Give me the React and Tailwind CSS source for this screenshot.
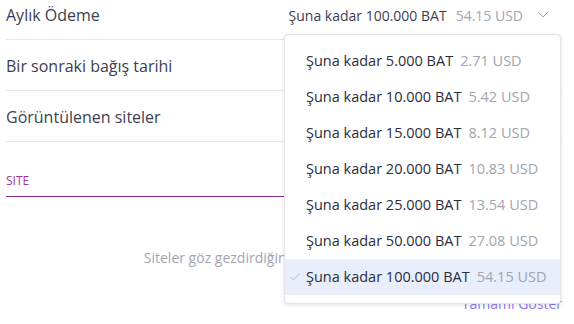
import React from "react";

const items = [
  ["5.000", "2.71"],
  ["10.000", "5.42"],
  ["15.000", "8.12"],
  ["20.000", "10.83"],
  ["25.000", "13.54"],
  ["50.000", "27.08"],
  ["100.000", "54.15"],
];

export default function App() {
  return (
    <div className="w-[574px] h-[324px] overflow-hidden bg-white" style={{ fontFamily: "'Open Sans', 'Noto Sans', sans-serif" }}>
      <div className="relative ml-[6px] w-[556px]">
        <div className="h-[40px] flex items-start justify-between border-b border-[#e6e6ec] pt-[3px]">
          <span className="text-[16px] leading-[24px] text-[#3d4052]">Aylık Ödeme</span>
          <div className="flex items-center h-[24px] pr-[14px]">
            <span className="text-[14px] text-[#3d4052]">Şuna kadar 100.000 BAT</span>
            <span className="ml-[9px] text-[14px] text-[#a3a5b0]">54.15 USD</span>
            <svg className="ml-[15px]" width="10" height="6" viewBox="0 0 10 6" fill="none">
              <path d="M0.5 0.5 L5 5 L9.5 0.5" stroke="#9fa1ad" strokeWidth="1" />
            </svg>
          </div>
        </div>
        <div className="h-[51px] border-b border-[#e6e6ec] pt-[14px]">
          <span className="text-[16px] leading-[24px] text-[#3d4052]">Bir sonraki bağış tarihi</span>
        </div>
        <div className="h-[51px] border-b border-[#e6e6ec] pt-[14px]">
          <span className="text-[16px] leading-[24px] text-[#3d4052]">Görüntülenen siteler</span>
        </div>
        <div className="pt-[25px]">
          <div className="border-b border-[#8e2a8f] pb-[5px] w-[278px]">
            <span className="text-[12px] leading-[16px] text-[#a2359f]">SITE</span>
          </div>
        </div>
        <div className="mt-[51px] text-center text-[14px] leading-[20px] text-[#a3a5b0]">
          Siteler göz gezdirdiğinizde burada görünür.
        </div>
        <div className="mt-[26px] text-right text-[14px] leading-[20px] text-[#8a7bf0]">Tamamı Göster</div>

        <div className="absolute left-[278px] top-[34px] w-[277px] rounded-[4px] border border-[#e4e4ea] bg-white py-[8px] shadow-[0_1px_4px_rgba(0,0,0,0.12)]">
          {items.map(([bat, usd], i) => {
            const sel = i === items.length - 1;
            return (
              <div key={bat} className={`relative h-[36px] flex items-center pl-[21px] ${sel ? "bg-[#e8eefc]" : ""}`}>
                {sel && (
                  <svg className="absolute left-[5px] top-[14px]" width="10" height="8" viewBox="0 0 10 8" fill="none">
                    <path d="M0.5 4 L3.5 7 L9.5 0.5" stroke="#b6bbd2" strokeWidth="1" />
                  </svg>
                )}
                <span className="text-[14.5px] text-[#2b2d3d]">Şuna kadar {bat} BAT</span>
                <span className="ml-[7px] text-[14.5px] text-[#a3a5b0]">{usd} USD</span>
              </div>
            );
          })}
        </div>
      </div>
    </div>
  );
}
